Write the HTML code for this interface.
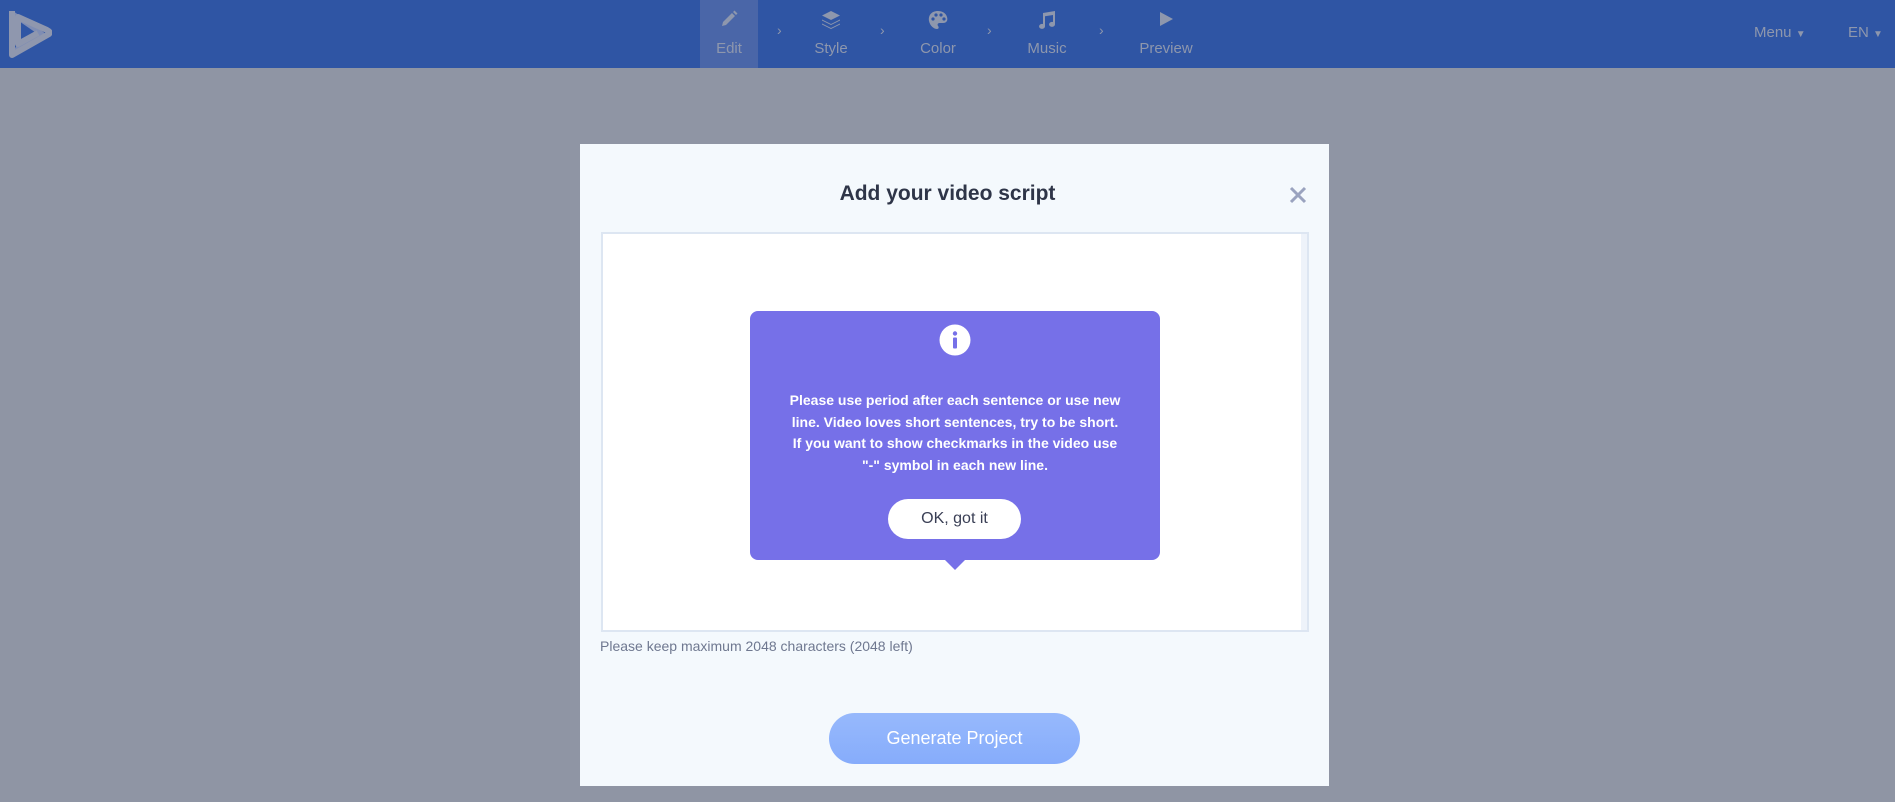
<!DOCTYPE html>
<html><head><meta charset="utf-8"><style>
*{margin:0;padding:0;box-sizing:border-box}
body{width:1895px;height:802px;background:#8f95a4;font-family:"Liberation Sans",sans-serif;position:relative;overflow:hidden}
.hdr{position:absolute;left:0;top:0;width:1895px;height:68px;background:#2f55a4}
.nav{position:absolute;top:0;height:68px;text-align:center;color:#8e97ad;font-size:15px}
.nav .ic{position:absolute;top:9px;left:50%;transform:translateX(-50%)}
.nav .lb{position:absolute;top:40px;left:0;right:0;text-align:center}
.chev{position:absolute;top:22px;color:#8e97ad;font-size:14px}
.modal{position:absolute;left:580px;top:144px;width:749px;height:642px;background:#f4f9fd}
.title{position:absolute;left:0;right:0;top:182px;text-align:center;font-size:21px;font-weight:bold;color:#2e3548}
.ta{position:absolute;left:601px;top:232px;width:708px;height:400px;background:#fff;border:2px solid #dde6f2}
.tip{position:absolute;left:750px;top:311px;width:410px;height:249px;background:#7670e8;border-radius:8px;color:#fff;text-align:center}
.tip:after{content:"";position:absolute;left:195px;bottom:-10px;border:10px solid transparent;border-bottom:0;border-top-color:#7670e8}
.tip p{position:absolute;top:79px;left:0;right:0;font-size:14px;font-weight:bold;line-height:21.5px}
.ok{position:absolute;left:138px;top:188px;width:133px;height:40px;background:#fff;border-radius:20px;color:#3a3f55;font-size:16px;line-height:40px}
.help{position:absolute;left:600px;top:638px;font-size:14px;color:#6f7890}
.gen{position:absolute;left:829px;top:713px;width:251px;height:51px;border-radius:26px;background:linear-gradient(#97b9fc,#86acfb);color:#fff;font-size:18px;line-height:51px;text-align:center}
</style></head><body>
<div class="hdr"></div>
<svg style="position:absolute;left:6px;top:6px" width="46" height="54" viewBox="0 0 46 54"><path d="M7 8 L36 28 L12 42 L9 47" fill="none" stroke="#7f8db3" stroke-width="5" stroke-linejoin="round"/><path d="M6 5 L6 49 L43 28 Q45 26 41 24 L12 11 L12 38 L32 27" fill="none" stroke="#8f97ae" stroke-width="6" stroke-linejoin="round"/></svg>
<div class="nav" style="left:700px;width:58px;background:#4a66a8"><svg class="ic" width="20" height="20" viewBox="0 0 20 20"><path d="M3 17 L4 13 L13 4 L16 7 L7 16Z M14 3 L15.5 1.5 L18.5 4.5 L17 6Z" fill="#8e97ad"/></svg><div class="lb">Edit</div></div>
<div class="chev" style="left:777px">›</div>
<div class="nav" style="left:801px;width:60px"><svg class="ic" width="22" height="22" viewBox="0 0 22 22"><path d="M11 2 L20 6.5 L11 11 L2 6.5Z" fill="#8e97ad"/><path d="M2 10.5 L11 15 L20 10.5 L20 11.5 L11 16 L2 11.5Z M2 14.5 L11 19 L20 14.5 L20 15.5 L11 20 L2 15.5Z" fill="#8e97ad"/></svg><div class="lb">Style</div></div>
<div class="chev" style="left:880px">›</div>
<div class="nav" style="left:905px;width:66px"><svg class="ic" width="22" height="22" viewBox="0 0 22 22"><path d="M11 2 C4 2 1 7 2 12 C3 17 7 20 10 20 C12 20 12 18 11 17 C10 15 11 14 13 14 L16 14 C20 14 21 11 20 8 C19 4 15 2 11 2Z" fill="#8e97ad"/><circle cx="6" cy="10" r="1.6" fill="#2f55a4"/><circle cx="9" cy="6" r="1.6" fill="#2f55a4"/><circle cx="14" cy="6" r="1.6" fill="#2f55a4"/><circle cx="17" cy="10" r="1.6" fill="#2f55a4"/></svg><div class="lb">Color</div></div>
<div class="chev" style="left:987px">›</div>
<div class="nav" style="left:1017px;width:60px"><svg class="ic" width="22" height="22" viewBox="0 0 22 22"><path d="M7 4 L19 2 L19 15 A3 2.5 0 1 1 17 13 L17 6 L9 7.3 L9 17 A3 2.5 0 1 1 7 15Z" fill="#8e97ad"/></svg><div class="lb">Music</div></div>
<div class="chev" style="left:1099px">›</div>
<div class="nav" style="left:1131px;width:70px"><svg class="ic" width="20" height="20" viewBox="0 0 20 20"><path d="M4 3 L17 10 L4 17Z" fill="#8e97ad"/></svg><div class="lb">Preview</div></div>
<div style="position:absolute;left:1754px;top:24px;color:#8e97ad;font-size:15px">Menu <span style="font-size:10px">▼</span></div>
<div style="position:absolute;left:1848px;top:24px;color:#8e97ad;font-size:15px">EN <span style="font-size:10px">▼</span></div>
<div class="modal"></div>
<div class="title">Add your video script</div>
<svg style="position:absolute;left:1289px;top:186px" width="18" height="18" viewBox="0 0 18 18"><path d="M2 2L16 16M16 2L2 16" stroke="#9aa3bf" stroke-width="3"/></svg>
<div class="ta"><div style="position:absolute;right:0;top:0;width:6px;height:396px;background:#eef3fa"></div></div>
<div class="tip">
<svg style="position:absolute;left:189px;top:13px" width="32" height="32" viewBox="0 0 32 32"><circle cx="16" cy="16" r="15.5" fill="#fff"/><circle cx="16" cy="9.5" r="2.2" fill="#7670e8"/><rect x="14" y="13.5" width="4" height="11" rx="1" fill="#7670e8"/></svg>
<p>Please use period after each sentence or use new<br>line. Video loves short sentences, try to be short.<br>If you want to show checkmarks in the video use<br>"-" symbol in each new line.</p>
<div class="ok">OK, got it</div>
</div>
<div class="help">Please keep maximum 2048 characters (2048 left)</div>
<div class="gen">Generate Project</div>
</body></html>
